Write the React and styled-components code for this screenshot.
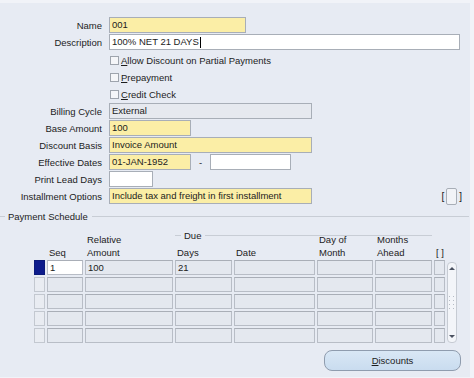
import React from "react";
import styled, { createGlobalStyle } from "styled-components";

const pageBg = "#f1f3f8";
const panelBg = "#e7ebf3";
const required = "#fbeea6";
const fieldBorder = "#a8aeb7";
const cellBg = "#e4e8ef";
const cellBorder = "#b8bdc6";
const textColor = "#1c1c1c";

const GlobalStyle = createGlobalStyle`
  body {
    margin: 0;
    background: ${pageBg};
    font-family: "Liberation Sans", Arial, sans-serif;
    font-size: 9.5px;
    color: ${textColor};
  }
`;

const Panel = styled.div`
  width: 470px;
  height: 374px;
  margin-top: 3px;
  background: ${panelBg};
  box-sizing: border-box;
  padding-top: 14px;
  display: flex;
  flex-direction: column;
`;

const FormRow = styled.div`
  display: flex;
  align-items: center;
  height: ${(p) => p.$h || 16}px;
  margin-bottom: ${(p) => (p.$mb === undefined ? 1 : p.$mb)}px;
`;

const Label = styled.div`
  width: 102px;
  margin-right: 7px;
  text-align: right;
  white-space: nowrap;
`;

const tones = {
  req: required,
  white: "#ffffff",
  grey: "#e6e9ef",
};

const Field = styled.div`
  width: ${(p) => p.$w}px;
  height: 16px;
  box-sizing: border-box;
  border: 1px solid ${fieldBorder};
  background: ${(p) => tones[p.$tone || "white"]};
  padding: 0 2px;
  line-height: 14px;
  white-space: nowrap;
  overflow: hidden;
  display: flex;
  align-items: center;
`;

const Caret = styled.span`
  display: inline-block;
  width: 1px;
  height: 11px;
  background: #000;
  margin-left: 1px;
`;

const Dash = styled.span`
  width: 19px;
  text-align: center;
`;

const CheckLabel = styled.label`
  display: flex;
  align-items: center;
`;

const Box = styled.span`
  width: 7px;
  height: 7px;
  border: 1px solid #9ea4ad;
  background: #f5f6f9;
  margin: 0 2px 0 1px;
`;

const Mn = styled.span`
  text-decoration: underline;
`;

const Spacer = styled.div`
  flex: 1;
`;

const BracketGroup = styled.div`
  display: flex;
  align-items: center;
  gap: 2px;
  margin-right: 8px;
  font-size: 10px;
`;

const SmallBox = styled.div`
  width: 11px;
  height: 17px;
  box-sizing: border-box;
  border: 1px solid ${fieldBorder};
  border-radius: 2px;
  background: #f1f3f7;
`;

const SectionHead = styled.div`
  display: flex;
  align-items: center;
  height: 12px;
  margin-top: 5px;
  margin-right: 1px;
`;

const Rule = styled.div`
  height: 1px;
  background: #c8cdd5;
  width: ${(p) => (p.$w ? `${p.$w}px` : "auto")};
  flex: ${(p) => (p.$w ? "none" : 1)};
`;

const SectionTitle = styled.span`
  padding: 0 4px 0 3px;
`;

const cols = "11px 36px 88px 57px 81px 56px 57px 11px 10px";

const HeadGrid = styled.div`
  display: grid;
  grid-template-columns: ${cols};
  grid-template-rows: 12px 18px;
  column-gap: 2px;
  margin: 7px 0 0 34px;
`;

const HeadCell = styled.div`
  grid-column: ${(p) => p.$col};
  grid-row: 1 / 3;
  align-self: end;
  line-height: 13px;
  padding-left: ${(p) => p.$pl || 2}px;
`;

const DueGroup = styled.div`
  grid-column: 4 / 8;
  grid-row: 1;
  display: flex;
  align-items: center;
  align-self: start;
  height: 12px;
`;

const BodyGrid = styled.div`
  display: grid;
  grid-template-columns: ${cols};
  grid-auto-rows: 15px;
  gap: 2px;
  margin: 1px 0 0 34px;
`;

const Cell = styled.div`
  box-sizing: border-box;
  border: 1px solid ${cellBorder};
  border-top-color: #a9aeb7;
  background: ${(p) => (p.$current ? "#ffffff" : cellBg)};
  padding: 0 2px;
  line-height: 13px;
  white-space: nowrap;
  overflow: hidden;
`;

const Indicator = styled.div`
  box-sizing: border-box;
  border: 1px solid ${(p) => (p.$on ? "#0b1a7a" : "#c3c8d0")};
  background: ${(p) => (p.$on ? "#0d1b8c" : "#e9ecf2")};
`;

const Scroll = styled.div`
  grid-column: 9;
  grid-row: 1 / 6;
  margin-top: 2px;
  box-sizing: border-box;
  border: 1px solid #c6cbd3;
  border-radius: 4px;
  background: #f3f5f9;
  display: flex;
  flex-direction: column;
  align-items: center;
  justify-content: space-between;
  padding: 3px 0;
`;

const Footer = styled.div`
  display: flex;
  justify-content: flex-end;
  margin-top: 7px;
  padding-right: 9px;
`;

const Button = styled.button`
  width: 137px;
  height: 21px;
  border: 1px solid #8f9cae;
  border-radius: 8px;
  background: linear-gradient(#d9e7f5, #c9dcef);
  font-family: "Liberation Sans", Arial, sans-serif;
  font-size: 9.5px;
  color: ${textColor};
  padding: 0;
`;

const Arrow = ({ down }) => (
  <svg width="6" height="5" viewBox="0 0 6 5">
    <path d={down ? "M0 1 L6 1 L3 4 Z" : "M0 4 L6 4 L3 1 Z"} fill="#4a5160" />
  </svg>
);

const Grip = () => (
  <svg width="6" height="14" viewBox="0 0 6 14">
    {[1, 5, 9, 13].map((y) => (
      <g key={y} fill="#b5bbc5">
        <rect x="0" y={y - 1} width="1" height="1" />
        <rect x="4" y={y - 1} width="1" height="1" />
      </g>
    ))}
  </svg>
);

const rows = [
  { seq: "1", amount: "100", days: "21", current: true },
  {},
  {},
  {},
  {},
];

export default function App() {
  return (
    <>
      <GlobalStyle />
      <Panel>
        <FormRow>
          <Label>Name</Label>
          <Field $w={137} $tone="req">001</Field>
        </FormRow>
        <FormRow $mb={2}>
          <Label>Description</Label>
          <Field $w={351}>
            100% NET 21 DAYS
            <Caret />
          </Field>
        </FormRow>
        <FormRow $h={17} $mb={0}>
          <Label />
          <CheckLabel>
            <Box />
            <span>
              <Mn>A</Mn>llow Discount on Partial Payments
            </span>
          </CheckLabel>
        </FormRow>
        <FormRow $h={17} $mb={0}>
          <Label />
          <CheckLabel>
            <Box />
            <span>
              <Mn>P</Mn>repayment
            </span>
          </CheckLabel>
        </FormRow>
        <FormRow $h={17} $mb={0}>
          <Label />
          <CheckLabel>
            <Box />
            <span>
              <Mn>C</Mn>redit Check
            </span>
          </CheckLabel>
        </FormRow>
        <FormRow>
          <Label>Billing Cycle</Label>
          <Field $w={203} $tone="grey">External</Field>
        </FormRow>
        <FormRow>
          <Label>Base Amount</Label>
          <Field $w={82} $tone="req">100</Field>
        </FormRow>
        <FormRow>
          <Label>Discount Basis</Label>
          <Field $w={203} $tone="req">Invoice Amount</Field>
        </FormRow>
        <FormRow>
          <Label>Effective Dates</Label>
          <Field $w={82} $tone="req">01-JAN-1952</Field>
          <Dash>-</Dash>
          <Field $w={81} />
        </FormRow>
        <FormRow>
          <Label>Print Lead Days</Label>
          <Field $w={44} />
        </FormRow>
        <FormRow>
          <Label>Installment Options</Label>
          <Field $w={203} $tone="req">
            Include tax and freight in first installment
          </Field>
          <Spacer />
          <BracketGroup>
            <span>[</span>
            <SmallBox />
            <span>]</span>
          </BracketGroup>
        </FormRow>

        <SectionHead>
          <Rule $w={5} />
          <SectionTitle>Payment Schedule</SectionTitle>
          <Rule />
        </SectionHead>

        <HeadGrid>
          <HeadCell $col={2}>Seq</HeadCell>
          <HeadCell $col={3}>
            Relative
            <br />
            Amount
          </HeadCell>
          <DueGroup>
            <Rule $w={6} />
            <SectionTitle>Due</SectionTitle>
            <Rule />
          </DueGroup>
          <HeadCell $col={4}>Days</HeadCell>
          <HeadCell $col={5}>Date</HeadCell>
          <HeadCell $col={6}>
            Day of
            <br />
            Month
          </HeadCell>
          <HeadCell $col={7}>
            Months
            <br />
            Ahead
          </HeadCell>
          <HeadCell $col={8} $pl={0}>
            [ ]
          </HeadCell>
        </HeadGrid>

        <BodyGrid>
          {rows.map((r, i) => (
            <React.Fragment key={i}>
              <Indicator $on={r.current} />
              <Cell $current={r.current}>{r.seq}</Cell>
              <Cell>{r.amount}</Cell>
              <Cell>{r.days}</Cell>
              <Cell />
              <Cell />
              <Cell />
              <Cell />
              {i === 0 && (
                <Scroll>
                  <Arrow />
                  <Grip />
                  <Arrow down />
                </Scroll>
              )}
            </React.Fragment>
          ))}
        </BodyGrid>

        <Footer>
          <Button>
            <Mn>D</Mn>iscounts
          </Button>
        </Footer>
      </Panel>
    </>
  );
}
